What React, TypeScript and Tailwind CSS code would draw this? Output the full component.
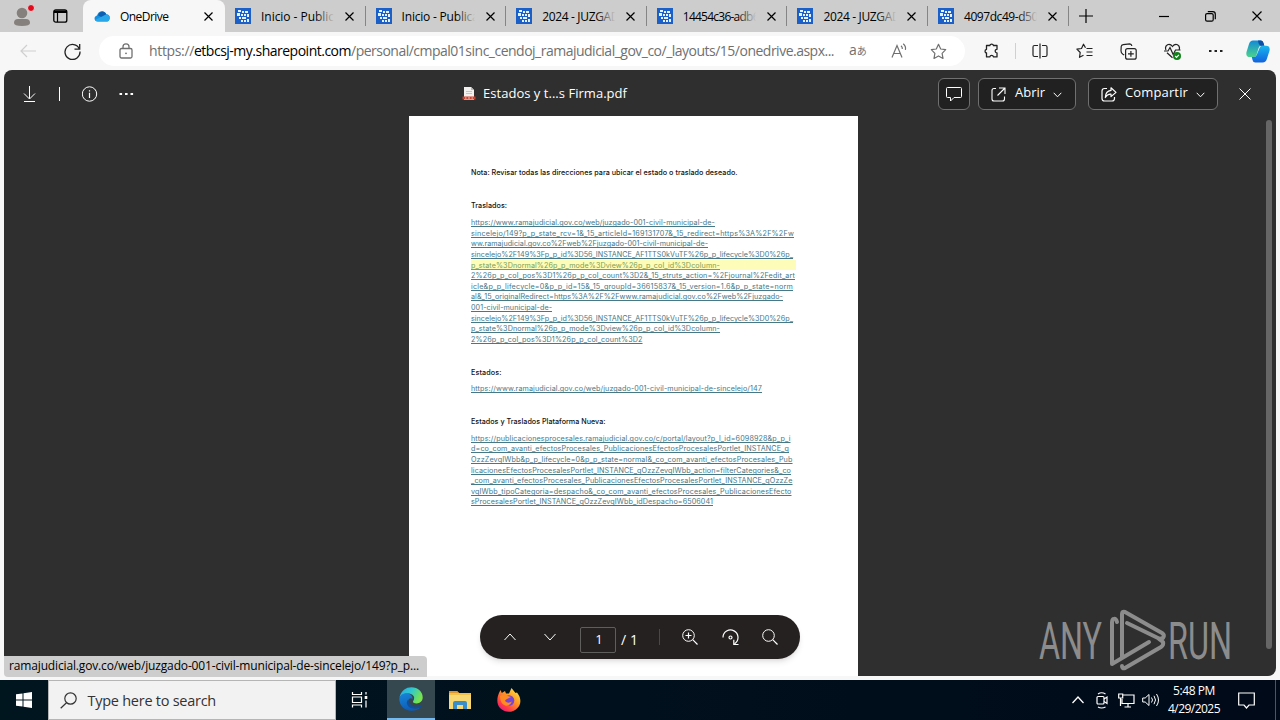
import React, { useLayoutEffect, useRef, useState } from 'react';

const UI_FONT = "font-['Open_Sans','Noto_Sans',sans-serif]";

interface FitProps {
  text: string;
  width: number;
  className?: string;
}

// One line of text, tracked so that it fills the given width
function Fit({ text, width, className = '' }: FitProps) {
  const ref = useRef<HTMLSpanElement>(null);
  const [tracking, setTracking] = useState(0);

  useLayoutEffect(() => {
    if (!ref.current) return;
    const natural = ref.current.getBoundingClientRect().width;
    setTracking((width - natural) / text.length);
  }, [text, width]);

  return (
    <span ref={ref} className={'inline-block whitespace-pre ' + className} style={{ letterSpacing: tracking }}>
      {text}
    </span>
  );
}

interface IconProps {
  w: number;
  h: number;
  className?: string;
  children: React.ReactNode;
}

function Icon({ w, h, className = '', children }: IconProps) {
  return (
    <svg width={w} height={h} viewBox={`0 0 ${w} ${h}`} fill="none" stroke="currentColor" strokeWidth="1.2" className={'shrink-0 ' + className}>
      {children}
    </svg>
  );
}

const CloseIcon = ({ size = 9, stroke = 1.2 }: { size?: number; stroke?: number }) => (
  <Icon w={size} h={size}><path strokeWidth={stroke} d={`M.5 .5L${size - 0.5} ${size - 0.5}M${size - 0.5} .5L.5 ${size - 0.5}`} /></Icon>
);

const SiteIcon = () => (
  <Icon w={16} h={16}>
    <rect width="16" height="16" fill="#1b5fc8" stroke="none" />
    <path fill="#e4f3ff" stroke="none" d="M3 2h3v2H3zM7 3h2v2H7zM2 5h3v3H2zM6 6h2v2H6zM10 3h3v2h-3zM9 6h2v2H9zM12 6h2v3h-2zM4 9h2v2H4zM7 9h4v2H7zM6 12h2v2H6zM9 12h2v2H9zM12 11h2v3h-2z" />
  </Icon>
);

const TABS = [
  { title: 'Inicio - Public', width: 73 },
  { title: 'Inicio - Publica', width: 77 },
  { title: '2024 - JUZGAD', width: 77 },
  { title: '14454c36-adb6', width: 76 },
  { title: '2024 - JUZGAD', width: 77 },
  { title: '4097dc49-d50', width: 74 },
];

function TabStrip() {
  return (
    <div className="flex h-8 items-stretch bg-[#cdcdcd] text-black">
      <div className="flex w-[83px] items-center pl-3">
        <Icon w={24} h={24}>
          <circle cx="10" cy="9" r="5.3" fill="#85807c" stroke="none" />
          <path d="M2 19q0-4 4-4h8q4 0 4 4 0 3-8 3t-8-3Z" fill="#85807c" stroke="none" />
          <circle cx="19" cy="4" r="3.5" fill="#e00b1c" stroke="#e3d7d7" strokeWidth="1" />
        </Icon>
        <Icon w={15} h={14} className="ml-[17px]">
          <rect x=".8" y=".8" width="13" height="12.4" rx="2" strokeWidth="1.3" />
          <path d="M1 2.7h13" strokeWidth="2.6" />
          <path d="M4.5 4v9" strokeWidth="1.2" />
        </Icon>
      </div>
      <div className="flex w-[142px] items-center rounded-t-lg bg-[#f7f7f7] pl-[11px]">
        <Icon w={16} h={12}>
          <path d="M4 11.5C0 11.5-.8 6.5 3 5.4 4.400.2 10.500-.3 12.300 4.300 16.400 4.300 17 10 13.500 11.500Z" fill="#1490df" stroke="none" />
          <path d="M4 5.200C6 .5 10.500.2 12.300 4.300L8 7.500Z" fill="#0f5eb0" stroke="none" />
          <path d="M1 10 12 4.400Q16 4.600 15.800 8 15 11.500 13 11.500H4Q2 11.500 1 10Z" fill="#28a8ea" stroke="none" />
        </Icon>
        <div className="mb-0.5 ml-2.5 w-[84px]"><Fit text="OneDrive" width={48.5} className="text-xs" /></div>
        <CloseIcon />
      </div>
      {TABS.map((tab, i) => (
        <div key={i} className="flex w-[140.600px] items-center pl-2.5">
          <SiteIcon />
          <div className="relative mb-0.5 ml-2.5 w-[78px]">
            <Fit text={tab.title} width={tab.width} className="text-xs" />
            <div className="absolute inset-y-0 right-0 w-6 bg-linear-to-r from-transparent to-[#cdcdcd] to-80%" />
          </div>
          <div className="ml-[6px] flex grow"><CloseIcon /></div>
          <div className="h-5 w-px bg-[#858585]" />
        </div>
      ))}
      <div className="flex grow items-center pl-[10px]">
        <Icon w={14} h={14}><path d="M7 0v14M0 7h14" /></Icon>
      </div>
      <div className="flex items-center pr-[18px]">
        <Icon w={10} h={10}><path d="M0 5.500h10" /></Icon>
        <Icon w={11} h={11} className="ml-9">
          <rect x=".6" y="2.600" width="7.600" height="7.600" rx="1.500" />
          <path d="M2.800.7h5q2.500 0 2.500 2.500v5" />
        </Icon>
        <div className="ml-9"><CloseIcon size={10} /></div>
      </div>
    </div>
  );
}

function AddressBar() {
  return (
    <div className="flex h-[38px] items-center bg-[#f7f7f7] text-[#222]">
      <div className="flex w-[99px] items-center pl-5">
        <Icon w={17} h={14} className="text-[#cfcfcf]"><path d="M1 7h15M7 1L1 7l6 6" /></Icon>
        <Icon w={17} h={17} className="ml-[27px]">
          <path d="M15.400 6A7.500 7.500 0 1 0 16 8.500M15.700 1v5.200h-5.200" strokeWidth="1.300" />
        </Icon>
      </div>
      <div className="flex h-[30px] w-[866px] items-center rounded-full bg-white pl-5 text-[#707070]">
        <Icon w={14} h={16}>
          <rect x="1" y="5.500" width="12" height="9.500" rx="1.500" strokeWidth="1.300" />
          <path d="M4 5.500V3.800a3 3 0 0 1 6 0v1.700" strokeWidth="1.300" />
          <circle cx="7" cy="10.300" r=".9" fill="currentColor" stroke="none" />
        </Icon>
        <div className="ml-4 flex w-[700px] text-sm">
          <Fit text="https://" width={45} />
          <Fit text="etbcsj-my.sharepoint.com" width={157} className="text-black" />
          <Fit text="/personal/cmpal01sinc_cendoj_ramajudicial_gov_co/_layouts/15/onedrive.aspx..." width={483} />
        </div>
        <div className="mb-0.5 flex w-[42px] items-center">
          <span className="text-sm">a</span>
          <span className="font-['Noto_Sans_CJK_JP',sans-serif] text-[10px]">あ</span>
        </div>
        <Icon w={16} h={16}>
          <path d="M1 14.500 6 2.500l5 12M2.700 10.500h6.600M10 2.800q1.600 1.200 1.300 3.200M12.200.8q3 2.400 2.200 6" />
        </Icon>
        <Icon w={17} h={17} className="ml-[23px]">
          <path d="m8.500 1.300 2.200 4.700 5 .7-3.600 3.600.9 5.100-4.500-2.500L4 15.400l.9-5.100L1.300 6.700l5-.7Z" strokeLinejoin="round" />
        </Icon>
      </div>
      <Icon w={16} h={16} className="ml-[19px]">
        <path d="M2.500 2.500h3.300a1.900 1.900 0 0 1 3.700 0h3.500v3.800a1.800 1.800 0 1 0 0 3.600v4H9.500a1.900 1.900 0 0 0-3.700 0H2.500V10a1.900 1.900 0 0 1 0-3.700Z" strokeLinejoin="round" strokeWidth="1.300" />
      </Icon>
      <div className="ml-[15px] h-4 w-px bg-[#d0d0d0]" />
      <Icon w={16} h={16} className="ml-4">
        <path d="M6 2.500H2.500q-1.500 0-1.500 1.500v8q0 1.500 1.500 1.500H6M8 .5v15M10 2.500h3.500q1.500 0 1.500 1.500v8q0 1.500-1.500 1.500H10" />
      </Icon>
      <Icon w={17} h={16} className="ml-7">
        <path d="M9.500 4.800 7.500 1.200 5.500 5.500.9 6.200 4.200 9.500 3.500 14.300 7.500 12.200M10.500 5.500h6M10.500 9h6M10.500 12.500h6" strokeLinejoin="round" />
      </Icon>
      <Icon w={17} h={17} className="ml-[27px]">
        <path d="M4.200 12 2.900 11.300Q.9 10 1 7.800L1.200 3.500q.2-1.700 2-1.900l6.500-.7q1.800 0 2.200 2.100" />
        <rect x="5.600" y="5.600" width="10.600" height="10.600" rx="2" />
        <path d="M10.900 8v5.800M8 10.900h5.800" />
      </Icon>
      <Icon w={18} h={17} className="ml-[27px]">
        <path d="M2 7Q.5 3.500 3.500 1.700 6.500.7 8.500 3.500 10.500.7 13.500 1.700 16.500 3.500 15 7M3 9.800l5.500 5M0 8h4l2-3.500 3.200 7L11.500 7h5" />
        <circle cx="13" cy="13" r="4" fill="#11821a" stroke="none" />
        <path d="m11.200 13 1.300 1.300 2.400-2.500" stroke="white" />
      </Icon>
      <Icon w={14} h={4} className="ml-[27px]">
        <path d="M0 2h2.500M5.500 2H8M11 2h2.500" strokeWidth="2.200" />
      </Icon>
      <Icon w={24} h={23} className="ml-[23px]">
        <defs>
          <linearGradient id="cp1" x1="0" y1="0" x2="0" y2="1"><stop stopColor="#118ad7" /><stop offset="1" stopColor="#4bd38c" /></linearGradient>
          <linearGradient id="cp2" x1="0" y1="0" x2="0" y2="1"><stop stopColor="#19b6ee" /><stop offset="1" stopColor="#1262de" /></linearGradient>
        </defs>
        <path d="M7 .5h8q2 0 2.500 2.500l.8 2.700h-3q-2 0-2.700 2.200L10.500 15q-.5 2-2.500 2H4Q-.5 17 .5 12L3 4Q4 .5 7 .5Z" fill="url(#cp1)" stroke="none" />
        <path d="M12 .5h3q2 0 2.500 2.500l.8 2.700h-3.500Q12.500 5 12 .5Z" fill="#0c4fa5" stroke="none" />
        <path d="M16.500 5.800H20q4.500 0 3.500 5L21 18.500q-1 4-4.500 4H9.300q-2.200 0-2.800-2.500L5.800 17H8q2 0 2.800-2.200l2.700-6.700q.8-2.300 3-2.300Z" fill="url(#cp2)" stroke="none" />
      </Icon>
    </div>
  );
}

const ChevronDown = () => <Icon w={9} h={6} className="mt-0.5"><path strokeWidth="1" d="m.7.8 3.800 4L8.300.8" /></Icon>;

function ViewerHeader() {
  return (
    <div className="flex h-[46px] shrink-0 items-center pt-0.5 pl-[18px] text-white">
      <Icon w={14} h={16}><path d="M7.500 0v12.500M2 7.500l5.500 5.500 5.500-5.500M2 15.500h11" strokeWidth="1" /></Icon>
      <div className="ml-[23px] h-3.5 w-px bg-white" />
      <Icon w={16} h={16} className="ml-[22px]">
        <circle cx="7.500" cy="8" r="7.200" strokeWidth="1" />
        <path d="M7.500 6.800V12M7.500 4.200v1.300" />
      </Icon>
      <Icon w={15} h={4} className="ml-[21px]"><path d="M.5 2h2.600M6 2h2.600M11.500 2h2.600" strokeWidth="2.200" /></Icon>
      <div className="flex w-[804px] items-center pl-[328px]">
        <Icon w={14} h={16}>
          <path d="M2 1h7l3 3v10H2Z" fill="#f3f1f0" stroke="none" />
          <path d="M9 1v3h3" fill="#bbb" stroke="none" />
          <path d="M4 5.500h6M4 7.500h6" stroke="#c8c4c2" />
          <path d="M.5 10.500h13v3H.5z" fill="#c9432f" stroke="none" />
          <path d="M3 12h1.500M6 12h2M9.500 12H11" stroke="#f2c5bd" />
        </Icon>
        <Fit text="Estados y t...s Firma.pdf" width={144} className="ml-[7px] text-[13px]" />
      </div>
      <div className="flex h-8 w-8 items-center justify-center rounded-md border border-[#707070] bg-[#212121]">
        <Icon w={16} h={16}><path d="M1.500 1.500h13q1 0 1 1v8q0 1-1 1H8L4.500 15v-3.500h-3q-1 0-1-1v-8q0-1 1-1Z" strokeWidth="1" strokeLinejoin="round" /></Icon>
      </div>
      <div className="ml-2 flex h-8 w-[98px] items-center rounded-md border border-[#707070] bg-[#212121] pl-3">
        <Icon w={15} h={15}><path d="M5 1.500H3q-2 0-2 2V12q0 2 2 2h8.500q2 0 2-2V9.500M8 1h6v6M14 1 6.500 8.500" strokeWidth="1.100" /></Icon>
        <Fit text="Abrir" width={30} className="mr-2 mb-0.5 ml-[9px] text-[13px]" />
        <ChevronDown />
      </div>
      <div className="ml-3 flex h-8 w-[130px] items-center rounded-md border border-[#707070] bg-[#212121] pl-3">
        <Icon w={16} h={15}>
          <path d="M6 1.500H3.500q-2.500 0-2.500 2.500v7.500Q1 14 3.500 14H11q2.500 0 2.500-2.500V10" />
          <path d="M10 .8 15 5.400 10 9.600V7.200Q6.500 6.800 4.300 10.500 4.500 4.200 10 3.400Z" strokeLinejoin="round" />
        </Icon>
        <Fit text="Compartir" width={63} className="mr-2 mb-0.5 ml-2 text-[13px]" />
        <ChevronDown />
      </div>
      <div className="ml-[21px]"><CloseIcon size={12} stroke={1} /></div>
    </div>
  );
}

type Line = [text: string, width: number];

const TRASLADOS: Line[] = [
  ['https://www.ramajudicial.gov.co/web/juzgado-001-civil-municipal-de-', 244],
  ['sincelejo/149?p_p_state_rcv=1&_15_articleId=169131707&_15_redirect=https%3A%2F%2Fw', 323],
  ['ww.ramajudicial.gov.co%2Fweb%2Fjuzgado-001-civil-municipal-de-', 237],
  ['sincelejo%2F149%3Fp_p_id%3D56_INSTANCE_AF1TTS0kVuTF%26p_p_lifecycle%3D0%26p_', 322],
  ['p_state%3Dnormal%26p_p_mode%3Dview%26p_p_col_id%3Dcolumn-', 249],
  ['2%26p_p_col_pos%3D1%26p_p_col_count%3D2&_15_struts_action=%2Fjournal%2Fedit_art', 324],
  ['icle&p_p_lifecycle=0&p_p_id=15&_15_groupId=36615837&_15_version=1.6&p_p_state=norm', 322],
  ['al&_15_originalRedirect=https%3A%2F%2Fwww.ramajudicial.gov.co%2Fweb%2Fjuzgado-', 312],
  ['001-civil-municipal-de-', 81],
  ['sincelejo%2F149%3Fp_p_id%3D56_INSTANCE_AF1TTS0kVuTF%26p_p_lifecycle%3D0%26p_', 322],
  ['p_state%3Dnormal%26p_p_mode%3Dview%26p_p_col_id%3Dcolumn-', 249],
  ['2%26p_p_col_pos%3D1%26p_p_col_count%3D2', 171.5],
];

const PLATAFORMA: Line[] = [
  ['https://publicacionesprocesales.ramajudicial.gov.co/c/portal/layout?p_l_id=6098928&p_p_i', 319.5],
  ['d=co_com_avanti_efectosProcesales_PublicacionesEfectosProcesalesPortlet_INSTANCE_q', 318],
  ['OzzZevqIWbb&p_p_lifecycle=0&p_p_state=normal&_co_com_avanti_efectosProcesales_Pub', 321.5],
  ['licacionesEfectosProcesalesPortlet_INSTANCE_qOzzZevqIWbb_action=filterCategories&_co', 320],
  ['_com_avanti_efectosProcesales_PublicacionesEfectosProcesalesPortlet_INSTANCE_qOzzZe', 321.5],
  ['vqIWbb_tipoCategoria=despacho&_co_com_avanti_efectosProcesales_PublicacionesEfecto', 320.5],
  ['sProcesalesPortlet_INSTANCE_qOzzZevqIWbb_idDespacho=6506041', 242],
];

function Links({ lines, highlighted = -1 }: { lines: Line[]; highlighted?: number }) {
  return (
    <div>
      {lines.map(([text, width], i) => (
        <div key={i} className={'h-[10.640px] w-[325px] ' + (i === highlighted ? 'bg-[#fdfcb8] text-[#7d9c55]' : 'text-[#467886]')}>
          <Fit text={text} width={width} className="underline decoration-1 underline-offset-[0.500px] [text-decoration-skip-ink:none]" />
        </div>
      ))}
    </div>
  );
}

function DocumentPage() {
  return (
    <div className="ml-[404.500px] h-[560px] w-[449px] bg-white pt-[51px] pl-[62.500px] font-['Inter',sans-serif] text-[7.200px] leading-[11px] text-[#111]">
      <div className="h-[33px]"><Fit text="Nota: Revisar todas las direcciones para ubicar el estado o traslado deseado." width={266.5} className="font-medium" /></div>
      <div className="h-[17px]"><Fit text="Traslados:" width={36} className="font-medium" /></div>
      <Links lines={TRASLADOS} highlighted={4} />
      <div className="mt-[22px] h-[16px]"><Fit text="Estados:" width={30.5} className="font-medium" /></div>
      <Links lines={[['https://www.ramajudicial.gov.co/web/juzgado-001-civil-municipal-de-sincelejo/147', 291]]} />
      <div className="mt-[23px] h-[16.500px]"><Fit text="Estados y Traslados Plataforma Nueva:" width={134.5} className="font-medium" /></div>
      <Links lines={PLATAFORMA} />
    </div>
  );
}

function PageControls() {
  return (
    <div className="absolute top-[545px] left-[476px] flex h-11 w-80 items-center rounded-full bg-[#242120] pl-6 text-white shadow-md">
      <Icon w={12} h={8}><path d="m.5 7 5.500-6 5.500 6" strokeWidth="1" /></Icon>
      <Icon w={12} h={8} className="ml-7"><path d="m.5 1 5.500 6 5.500-6" strokeWidth="1" /></Icon>
      <div className="mt-1.5 ml-6 flex h-[26px] w-9 items-center justify-center rounded-xs border border-[#605e5c] pl-0.5 text-[13px]">1</div>
      <Fit text="/ 1" width={17} className="mt-1.5 ml-[5px] text-sm" />
      <div className="ml-[21px] h-4 w-px bg-[#4a4846]" />
      <Icon w={16} h={16} className="ml-[22px]">
        <circle cx="6.500" cy="6.500" r="5.800" strokeWidth="1" />
        <path d="M6.500 3.500v6M3.500 6.500h6M10.700 10.700l4.800 4.800" />
      </Icon>
      <Icon w={18} h={17} className="ml-[24px]">
        <path d="M1 8.500a7.500 7.500 0 1 1 11.700 6.200M16.500 15.500h-4.700v-4.700" />
        <circle cx="8.500" cy="8.500" r="1.500" />
      </Icon>
      <Icon w={16} h={16} className="ml-[22px]">
        <circle cx="6.500" cy="6.500" r="5.800" strokeWidth="1" />
        <path d="m10.700 10.700 4.800 4.800" />
      </Icon>
    </div>
  );
}

function Watermark() {
  return (
    <svg width="204" height="64" viewBox="0 0 204 64" className="absolute top-[538px] left-[1034px] font-['Roboto',sans-serif] text-[51px]" fill="#8c8c8c">
      <text x="1" y="51" textLength="63" lengthAdjust="spacingAndGlyphs">ANY</text>
      <text x="130" y="51" textLength="64" lengthAdjust="spacingAndGlyphs">RUN</text>
      <g fill="none" stroke="#8c8c8c" strokeWidth="4" strokeLinejoin="round" strokeLinecap="round">
        <path d="M79 14q-1-4-3.500-3-1.500.5-1.500 4v41l37-22" />
        <path d="M84 49V6q0-3 3-2l37 21q3 2 1 5l-3 1L89 15" />
        <path d="m121 31 4 3q1 3-2 5L87 60q-3 1-3-2" />
      </g>
    </svg>
  );
}

function Taskbar() {
  return (
    <div className="flex h-10 items-center bg-linear-to-r from-[#00161f] to-[#000a19] text-white">
      <div className="flex w-12 justify-center">
        <Icon w={16} h={16}>
          <path d="M0 2.300 6.500 1.400v6H0zM7.500 1.200 16 0v7.400H7.500zM0 8.500h6.500v6L0 13.700zM7.500 8.500H16V16l-8.500-1.200z" fill="white" stroke="none" />
        </Icon>
      </div>
      <div className="flex h-10 w-72 items-center border border-[#b5b5b5] bg-[#f2f2f2] pl-[11px] text-[#333]">
        <Icon w={17} h={17}><circle cx="10.500" cy="6.500" r="5.700" /><path d="M6.500 10.700.7 16.300" /></Icon>
        <Fit text="Type here to search" width={128.5} className="mt-0.5 ml-[10.500px] text-[14.500px]" />
      </div>
      <div className="flex w-[51px] justify-center pr-1">
        <Icon w={17} h={16}>
          <path d="M1.500 0v2.500h9V0M1.500 15.500V13h9v2.500M1.500 5h9v5.500h-9zM15 0v2.500M15 8.500v7" />
          <path d="M13.700 4h2.600v3h-2.600z" fill="white" stroke="none" />
        </Icon>
      </div>
      <div className="flex h-10 w-12 items-center justify-center border-b-2 border-[#76b9ed] bg-[#35474f]">
        <Icon w={24} h={24}>
          <defs>
            <linearGradient id="e1" x1="0" y1="0" x2="1" y2=".4"><stop stopColor="#2aa8dd" /><stop offset=".5" stopColor="#2fc7d2" /><stop offset="1" stopColor="#78e44d" /></linearGradient>
            <linearGradient id="e2" x1="0" y1="0" x2=".3" y2="1"><stop stopColor="#1786d8" /><stop offset="1" stopColor="#0d5db8" /></linearGradient>
          </defs>
          <path d="M.5 10.500C2 3.500 7 .3 12.500.3 19 .3 23.700 5.200 23.700 10.300c0 4-3 6.200-6 6.200-2.700 0-4.300-1.200-3.600-2.200C17.500 9 12.500 6.500 9 6.500c-4 0-7 1.700-8.500 4Z" fill="url(#e1)" stroke="none" />
          <path d="M.3 12C.5 8.500 4 6 8 6.400c3.500.3 5.800 2.600 5.600 5.300C11 10 9 12.500 9 15c0 3.500 3.500 6.500 7.500 6.500 2 0 3.600-.6 5-1.200C19 23 16 23.800 12.500 23.800 5.500 23.800.2 18.500.3 12Z" fill="url(#e2)" stroke="none" />
          <path d="M9.200 12.500c-3.700 4 .5 10 7.800 9 2-.2 3.500-.8 4.800-1.500.5-.4 1-1.500.3-1.500-6 2.600-12 .3-12.900-6Z" fill="#124f98" stroke="none" />
        </Icon>
      </div>
      <div className="flex w-[50px] justify-center">
        <Icon w={22} h={20}>
          <path d="M0 1h8l2 2h12v16H0Z" fill="#f2c14a" stroke="none" />
          <path d="M0 1h8l2 2H0Z" fill="#db9630" stroke="none" />
          <path d="M0 5h22v14H0Z" fill="#f8d873" stroke="none" />
          <path d="M4 19v-6q0-2 2-2h10q2 0 2 2v6h-4v-4H8v4Z" fill="#398dcb" stroke="none" />
        </Icon>
      </div>
      <div className="flex w-12 justify-center">
        <Icon w={24} h={24}>
          <defs>
            <linearGradient id="f1" x1="1" y1="0" x2=".2" y2="1"><stop stopColor="#fff14f" /><stop offset=".45" stopColor="#ff9a24" /><stop offset=".8" stopColor="#ff3b48" /><stop offset="1" stopColor="#e31587" /></linearGradient>
          </defs>
          <path d="M2 5 3.500 2l1.300 3L8 3l1 2.500h3L14.500 0l4 5 1.500-.5C25 10.500 24 17 20 20.500c-5 5-13 4-17-.5C-1 15.500.2 9 2 5Z" fill="url(#f1)" stroke="none" />
          <circle cx="12" cy="12.500" r="5.300" fill="#7646d7" stroke="none" />
          <path d="M3 8q4-3 8 0l3 1-4 2q-1.500.5-2 2 3 3 7 .5-2 5-7 4Q3 15.500 3 8Z" fill="#ff8b25" stroke="none" />
        </Icon>
      </div>
      <div className="flex grow items-center justify-end">
        <Icon w={12} h={8}><path d="m.5 7 5.500-6 5.500 6" strokeWidth="1.300" /></Icon>
        <Icon w={12} h={17} className="ml-3">
          <rect x="1" y="4.500" width="7" height="7.500" rx="1" />
          <path d="m8 7 3-2v6.500L8 9.500M2 2Q5.500-.5 9.500 2M2 15q3.500 2 7.500 0" />
        </Icon>
        <Icon w={17} h={15} className="ml-2.5">
          <path d="M5 2h11v8.500H4V6M10 10.500V14M6.500 14H13M.7 1h4v4h-4zM2.500 5v8" />
        </Icon>
        <Icon w={18} h={14} className="ml-[7px]">
          <path d="M.7 5v4h2.500L7 12.500v-11L3.200 5ZM9.500 4.500q2 2.500 0 5M12 2.800q3 4.200 0 8.400M14.500 1q4 6 0 12" strokeWidth="1" />
        </Icon>
        <div className="ml-[7px] flex w-[54px] flex-col items-center text-xs leading-[18px]">
          <Fit text="5:48 PM" width={42} />
          <Fit text="4/29/2025" width={52} />
        </div>
        <Icon w={17} h={17} className="mr-5 ml-[17px]"><path d="M.7 1h15.600v12H11l-2.500 3L6 13H.7Z" /></Icon>
        <div className="mr-1 h-10 w-px bg-[#4d5660]" />
      </div>
    </div>
  );
}

export default function App() {
  return (
    <div className={'flex h-[720px] w-[1280px] flex-col overflow-hidden bg-[#f7f7f7] ' + UI_FONT}>
      <TabStrip />
      <AddressBar />
      <div className="relative mx-1 mb-1 flex h-[606px] flex-col rounded-lg bg-[#2f2f2f]">
        <ViewerHeader />
        <div className="flex">
          <DocumentPage />
          <div className="mt-1 ml-auto h-[529px] w-1.5 rounded-full bg-[#666]" />
          <div className="w-1" />
        </div>
        <PageControls />
        <Watermark />
        <div className="absolute top-[586px] left-0 flex h-[21px] w-[423px] items-center rounded-tr rounded-bl bg-[#cdcdcd] pb-px pl-[5px] text-black">
          <Fit text="ramajudicial.gov.co/web/juzgado-001-civil-municipal-de-sincelejo/149?p_p..." width={410} className="text-xs" />
        </div>
      </div>
      <Taskbar />
    </div>
  );
}
